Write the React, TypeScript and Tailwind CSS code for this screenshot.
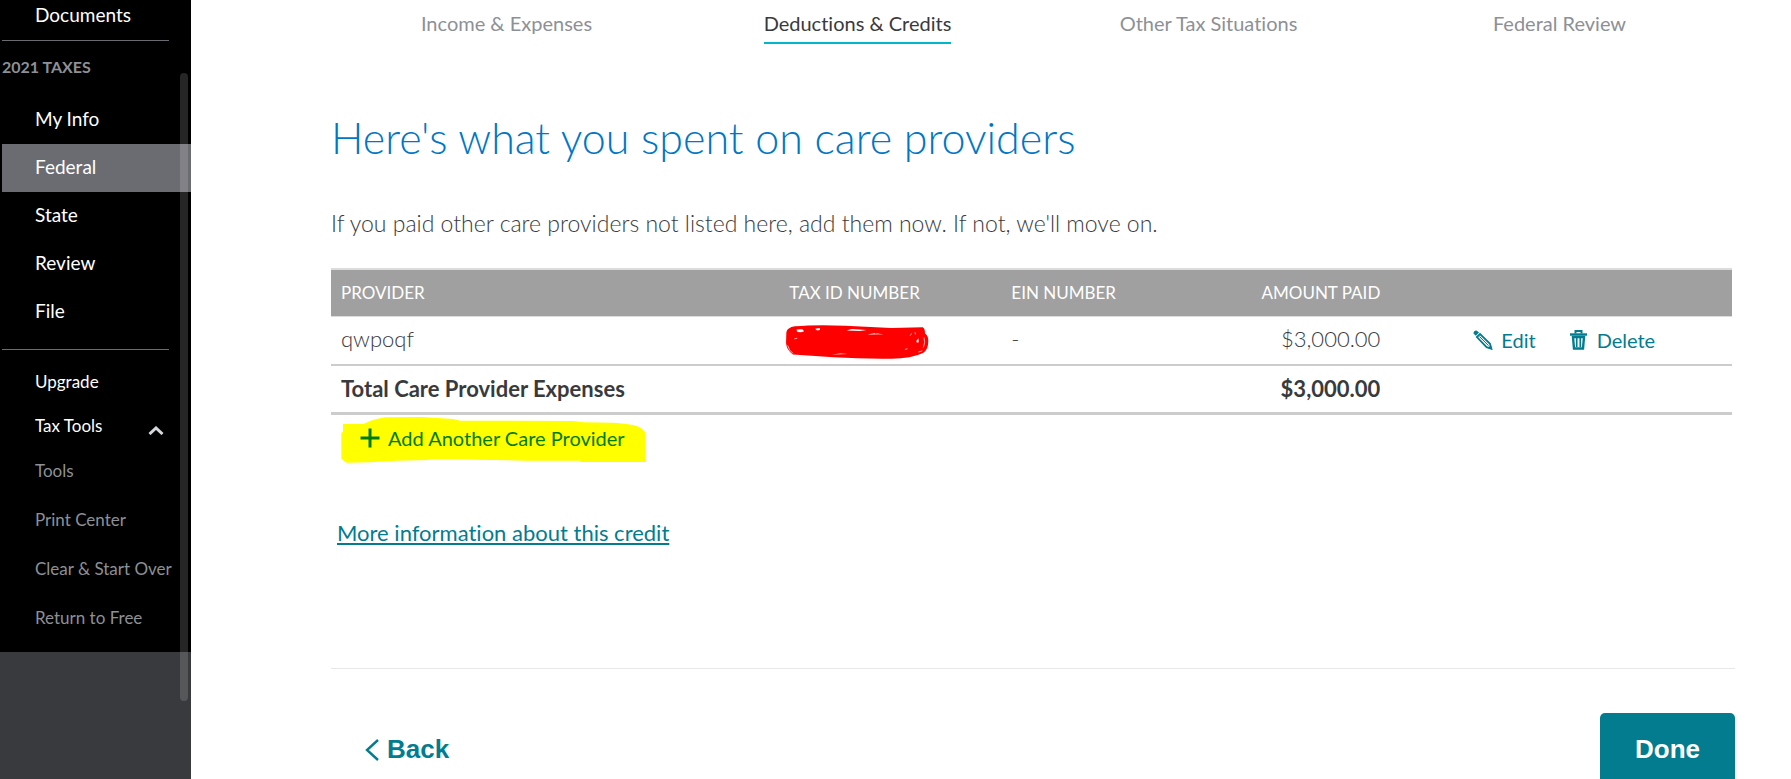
const tabs = [
  { label: "Income & Expenses", active: false },
  { label: "Deductions & Credits", active: true },
  { label: "Other Tax Situations", active: false },
  { label: "Federal Review", active: false },
];

const taxSections = [
  { label: "My Info", active: false },
  { label: "Federal", active: true },
  { label: "State", active: false },
  { label: "Review", active: false },
  { label: "File", active: false },
];

const taxTools = ["Tools", "Print Center", "Clear & Start Over", "Return to Free"];

const Sidebar = () => (
  <aside className="relative w-[191px] shrink-0 bg-[#393a3d] text-white">
    <nav className="bg-black pl-[2px] pb-[10px]">
      <a href="#documents" className="flex h-10 items-start pl-[33px] text-[19px] leading-[29px]">
        Documents
      </a>
      <div className="mr-[22px] h-px bg-[#6b6c72]" />
      <h2 className="pt-4 text-[16px] font-bold leading-5 text-[#8d9096]">2021 TAXES</h2>

      <ul className="mt-[19px]">
        {taxSections.map((item) => (
          <li key={item.label}>
            <a
              href="#section"
              className={`flex h-12 items-center pb-px pl-[33px] text-[19px] ${item.active ? "bg-[#6b6c72]" : ""}`}
            >
              {item.label}
            </a>
          </li>
        ))}
      </ul>

      <div className="mr-[22px] mt-[13px] h-px bg-[#6b6c72]" />
      <a href="#upgrade" className="mt-[10px] flex h-11 items-center pl-[33px] text-[17px]">
        Upgrade
      </a>
      <button type="button" className="flex h-[43px] w-full items-center justify-between pl-[33px] pr-[27px] text-[17px]">
        Tax Tools
        <svg className="mt-[10px] h-[9px] w-4" viewBox="0 0 16 9" fill="none" stroke="#d4d7dc" strokeWidth="3">
          <path d="M1.5 8 L8 2 L14.5 8" />
        </svg>
      </button>
      <ul className="space-y-px">
        {taxTools.map((item) => (
          <li key={item}>
            <a href="#tool" className="flex h-12 items-center pl-[33px] text-[17px] text-[#8d9096]">
              {item}
            </a>
          </li>
        ))}
      </ul>
    </nav>
    <div className="absolute right-[3px] top-[73px] h-[628px] w-2 rounded-full bg-white/15" />
  </aside>
);

const PencilIcon = () => (
  <svg className="h-5 w-5" viewBox="0 0 20 20" fill="none" stroke="#037c8f" strokeWidth="1.8">
    <path d="M0.5 3.5 Q0.5 0.5 3.5 0.5 L6 2.6 L2.8 5.8 Z" fill="#037c8f" stroke="none" />
    <path d="M3.9 7 L7 4 L17 13.8 L18.3 18.6 L13.6 17.2 Z" />
    <path d="M6.5 6.5 L15.5 15.6" strokeWidth="1" />
    <path d="M14.8 18 L17.8 15 L19.4 19.8 Z" fill="#037c8f" stroke="none" />
  </svg>
);

const TrashIcon = () => (
  <svg className="h-5 w-[17px]" viewBox="0 0 17 20" fill="none" stroke="#037c8f">
    <path d="M5.5 3.5 V1 H11.5 V3.5" strokeWidth="2" />
    <path d="M0 4.5 H17" strokeWidth="2.4" />
    <path d="M3 7 L4 18.5 H13 L14 7 Z" strokeWidth="2.4" />
    <path d="M6.7 8 V17 M10.3 8 V17" strokeWidth="1.7" />
  </svg>
);

const Redaction = () => (
  <svg className="mt-1 h-[34px] w-36" viewBox="0 0 432 103">
    <path
      fill="#ff0000"
      d="M2 22 Q4 8 28 4 Q90 -2 180 2 L320 9 L415 7 Q422 9 422 26 Q432 32 432 48 Q432 76 416 85 Q380 102 320 102 Q230 103 145 98 L22 89 Q2 76 1 54 Z"
    />
    <path
      fill="#ffffff"
      d="M33 14 L50 13 L56 19 L46 22 L34 21 Z M89 11 L103 9 L104 15 L95 17 Z M184 17 L200 12 L245 15 L224 18 Z M246 29 L270 25 L296 28 Z M396 48 L402 40 L403 52 L397 54 Z M140 89 L165 86 L188 88 Z"
    />
    <path
      fill="none"
      stroke="#ffffff"
      strokeWidth="2"
      d="M419 38 Q424 52 417 68 M6 62 Q10 78 22 86 M26 42 L35 40 M361 74 L369 72 M402 82 L414 78 M377 32 L383 24 M392 22 L393 29"
    />
    <path fill="none" stroke="#393a3d" strokeWidth="2" d="M273 24 V28 M32 20 L36 21 M381 28 L386 24" />
  </svg>
);

const ProviderTable = () => (
  <table className="w-full table-fixed border-collapse text-left">
    <colgroup>
      <col className="w-[32%]" />
      <col className="w-[222px]" />
      <col className="w-[154px]" />
      <col className="w-[235px]" />
      <col />
    </colgroup>
    <thead>
      <tr className="h-[47px] border-b border-t-2 border-[#dcdcdc] bg-[#a0a0a0] text-[17px] text-white">
        <th className="px-[10px] font-normal">PROVIDER</th>
        <th className="px-[10px] font-normal">TAX ID NUMBER</th>
        <th className="px-[10px] font-normal">EIN NUMBER</th>
        <th className="px-[10px] text-right font-normal">AMOUNT PAID</th>
        <th aria-label="Actions" />
      </tr>
    </thead>
    <tbody className="text-[22px] text-[#393a3d]">
      <tr className="h-[49px] border-b-2 border-[#ccc]">
        <td className="px-[10px] pb-[3px] font-light">qwpoqf</td>
        <td className="px-[6px]">
          <Redaction />
        </td>
        <td className="px-[10px] pb-[3px] font-light">-</td>
        <td className="px-[10px] pb-[3px] text-right font-light">$3,000.00</td>
        <td className="pl-[83px] text-[20px] text-[#037c8f]">
          <div className="flex items-center gap-[34px]">
            <button type="button" className="flex items-center gap-2">
              <PencilIcon />
              Edit
            </button>
            <button type="button" className="flex items-center gap-[10px]">
              <TrashIcon />
              Delete
            </button>
          </div>
        </td>
      </tr>
      <tr className="h-12 border-b-3 border-[#ccc] font-bold">
        <td className="px-[10px]" colSpan={3}>
          Total Care Provider Expenses
        </td>
        <td className="px-[10px] text-right">$3,000.00</td>
        <td />
      </tr>
    </tbody>
  </table>
);

const AddProvider = () => (
  <button
    type="button"
    className="relative ml-[10px] mt-[2px] flex h-[46px] w-[305px] items-center gap-2 pb-[3px] pl-[19px] text-[20px] text-[#007c00]"
  >
    <svg className="absolute inset-0 h-full w-full" viewBox="0 0 915 138" preserveAspectRatio="none">
      <path
        fill="#ffff00"
        d="M6 21 H67 L87 12 Q110 4 132 1 L242 0 L337 6 L357 11 L697 12 L727 16 L817 17 Q860 20 885 26 Q912 36 912 50 L915 135 H720 L717 131 H557 L397 128 V126 H267 L262 129 L165 131 L87 136 L17 137 L1 125 V48 L6 44 Z"
      />
    </svg>
    <svg className="relative h-5 w-5" viewBox="0 0 20 20" stroke="currentColor" strokeWidth="3">
      <path d="M10 0.5 V19.5 M0.5 10 H19.5" />
    </svg>
    <span className="relative">Add Another Care Provider</span>
  </button>
);

const App = () => {
  return (
    <div className="flex h-screen overflow-hidden bg-white font-[Lato,'Open_Sans',sans-serif] [font-variant-ligatures:none]">
      <Sidebar />
      <main className="flex-1 pl-[140px] pr-14">
        <nav className="grid grid-cols-4 justify-items-center text-[20px]">
          {tabs.map((tab) => (
            <a
              key={tab.label}
              href="#tab"
              className={`h-11 border-b-2 leading-[46px] ${
                tab.active ? "border-[#00b8c9] text-[#393a3d]" : "border-transparent text-[#8d9096]"
              }`}
            >
              {tab.label}
            </a>
          ))}
        </nav>

        <h1 className="mt-[66px] text-[43px] font-light leading-[56px] text-[#0077c5]">
          Here's what you spent on care providers
        </h1>
        <p className="mb-[30px] mt-[42px] text-[23px] font-light leading-[30px] text-[#393a3d]">
          If you paid other care providers not listed here, add them now. If not, we'll move on.
        </p>

        <div className="pr-[3px]">
          <ProviderTable />
        </div>
        <AddProvider />

        <a
          href="#more"
          className="ml-[6px] mt-[55px] inline-block text-[22px] leading-[30px] text-[#037c8f] underline decoration-2 underline-offset-2"
        >
          More information about this credit
        </a>

        <footer className="mt-[120px] flex items-start justify-between border-t border-[#e8e8e8] pt-11 font-['Liberation_Sans',Arial,sans-serif] text-[26px] font-bold">
          <button type="button" className="flex h-[74px] items-center gap-2 pl-[34px] text-[#037c8f]">
            <svg className="h-[22px] w-[14px]" viewBox="0 0 14 22" fill="none" stroke="currentColor" strokeWidth="2.4">
              <path d="M13 1 L2 11 L13 21" />
            </svg>
            Back
          </button>
          <button type="button" className="h-[74px] w-[135px] rounded-[5px] bg-[#037c8f] text-white">
            Done
          </button>
        </footer>
      </main>
    </div>
  );
};

export default App;
